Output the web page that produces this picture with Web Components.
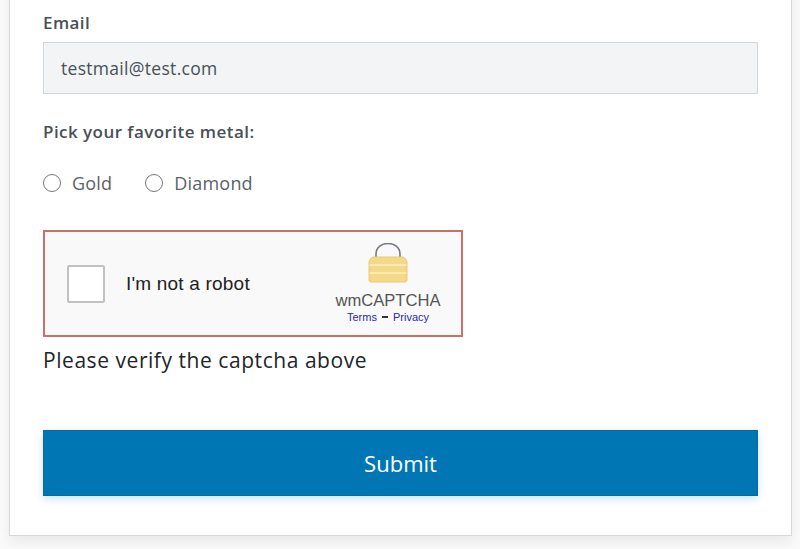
<!DOCTYPE html>
<html>
<head>
<meta charset="utf-8">
<title>Form</title>
<style>
html, body { margin: 0; padding: 0; height: 549px; overflow: hidden; background: #fbfbfb; }
body { font-family: "Open Sans", "Noto Sans", sans-serif; }
</style>
</head>
<body>
<form-card>
  <text-field label="Email" value="testmail@test.com"></text-field>
  <radio-group label="Pick your favorite metal:" options="Gold,Diamond"></radio-group>
  <wm-captcha></wm-captcha>
  <captcha-note>Please verify the captcha above</captcha-note>
  <submit-button>Submit</submit-button>
</form-card>

<script>
class FormCard extends HTMLElement {
    constructor() {
        super();
        this.attachShadow({mode: "open"}).innerHTML = `
        <style>
        :host {
            display: block;
            box-sizing: border-box;
            width: 783px;
            height: 556px;
            margin: -20px 0 0 9px;
            padding: 31px 33px 0 33px;
            background: #fff;
            border: 1px solid #d6d8da;
            box-shadow: 0 6px 14px rgba(0, 0, 0, 0.08);
        }
        </style>
        <slot></slot>`;
    }
}

class TextField extends HTMLElement {
    constructor() {
        super();
        this.attachShadow({mode: "open"}).innerHTML = `
        <style>
        :host { display: block; }
        label {
            display: block;
            height: 22px;
            line-height: 22px;
            font-size: 17px;
            font-weight: 600;
            letter-spacing: 0.4px;
            color: #495057;
        }
        .input {
            box-sizing: border-box;
            height: 52px;
            margin-top: 8px;
            padding: 0 17px;
            line-height: 50px;
            font-size: 17.5px;
            letter-spacing: 0.3px;
            color: #495057;
            background: #f2f4f6;
            border: 1px solid #d4d7da;
        }
        </style>
        <label>${this.getAttribute("label")}</label>
        <div class="input">${this.getAttribute("value")}</div>`;
    }
}

class RadioGroup extends HTMLElement {
    constructor() {
        super();
        const options = this.getAttribute("options").split(",");
        this.attachShadow({mode: "open"}).innerHTML = `
        <style>
        :host { display: block; margin-top: 27px; }
        .title {
            height: 22px;
            line-height: 22px;
            font-size: 17px;
            font-weight: 600;
            letter-spacing: 0.45px;
            color: #495057;
        }
        .row { display: flex; gap: 33px; margin-top: 29px; height: 22px; }
        .opt {
            display: flex;
            align-items: center;
            gap: 11px;
            font-size: 18px;
            letter-spacing: 0.2px;
            color: #5a6167;
        }
        .dot {
            box-sizing: border-box;
            width: 18px;
            height: 18px;
            border: 1.5px solid #777;
            border-radius: 50%;
            background: #fff;
        }
        </style>
        <div class="title">${this.getAttribute("label")}</div>
        <div class="row">
            ${options.map(o => `<div class="opt"><span class="dot"></span><span>${o}</span></div>`).join("")}
        </div>`;
    }
}

class WmCaptcha extends HTMLElement {
    constructor() {
        super();
        this.attachShadow({mode: "open"}).innerHTML = `
        <style>
        :host {
            display: flex;
            box-sizing: border-box;
            width: 420px;
            height: 107px;
            margin-top: 36px;
            align-items: center;
            background: #f9f9f9;
            border: 2px solid #c8716a;
            font-family: "Liberation Sans", Arial, sans-serif;
        }
        .box {
            box-sizing: border-box;
            width: 38px;
            height: 38px;
            margin-left: 22px;
            background: #fff;
            border: 2px solid #c1c1c1;
            border-radius: 2px;
        }
        .text { margin-left: 21px; font-size: 19px; letter-spacing: 0.2px; color: #222; flex: 1; }
        .brand {
            display: flex;
            flex-direction: column;
            align-items: center;
            width: 108px;
            margin-right: 19px;
        }
        svg { display: block; }
        .name { font-size: 16.6px; line-height: 18px; color: #555; margin-top: 9px; white-space: nowrap; }
        .links { display: flex; align-items: center; gap: 5px; font-size: 11px; line-height: 13px; margin-top: 1px; }
        .links a { color: #2a2aa8; text-decoration: none; }
        .links span { width: 6px; height: 2px; background: #333; margin: 0 0 2px; }
        </style>
        <div class="box"></div>
        <div class="text">I'm not a robot</div>
        <div class="brand">
            <svg width="42" height="40" viewBox="0 0 42 40">
                <path d="M9 15 V11 C9 -3 33 -3 33 11 V15" fill="none" stroke="#77777f" stroke-width="1.6"/>
                <path d="M2 19 Q2 16 6 14 H36 Q40 16 40 19 V37 Q40 39 38 39 H4 Q2 39 2 37 Z" fill="#f6d889" stroke="#e8c976" stroke-width="1"/>
                <path d="M2.5 22 H39.5 M2.5 30 H39.5" stroke="#fbe9b4" stroke-width="2"/>
            </svg>
            <div class="name">wmCAPTCHA</div>
            <div class="links"><a>Terms</a><span></span><a>Privacy</a></div>
        </div>`;
    }
}

class CaptchaNote extends HTMLElement {
    constructor() {
        super();
        this.attachShadow({mode: "open"}).innerHTML = `
        <style>
        :host {
            display: block;
            height: 30px;
            margin-top: 8px;
            line-height: 30px;
            font-size: 21px;
            letter-spacing: 0.55px;
            color: #212529;
        }
        </style>
        <slot></slot>`;
    }
}

class SubmitButton extends HTMLElement {
    constructor() {
        super();
        this.attachShadow({mode: "open"}).innerHTML = `
        <style>
        :host {
            display: flex;
            box-sizing: border-box;
            height: 66px;
            margin-top: 55px;
            align-items: center;
            justify-content: center;
            font-size: 22px;
            color: #fff;
            background: #0076b4;
            border: 1px solid #0b6a9c;
            box-shadow: 0 3px 8px rgba(0, 118, 180, 0.2);
        }
        </style>
        <slot></slot>`;
    }
}

customElements.define("form-card", FormCard);
customElements.define("text-field", TextField);
customElements.define("radio-group", RadioGroup);
customElements.define("wm-captcha", WmCaptcha);
customElements.define("captcha-note", CaptchaNote);
customElements.define("submit-button", SubmitButton);
</script>
</body>
</html>
